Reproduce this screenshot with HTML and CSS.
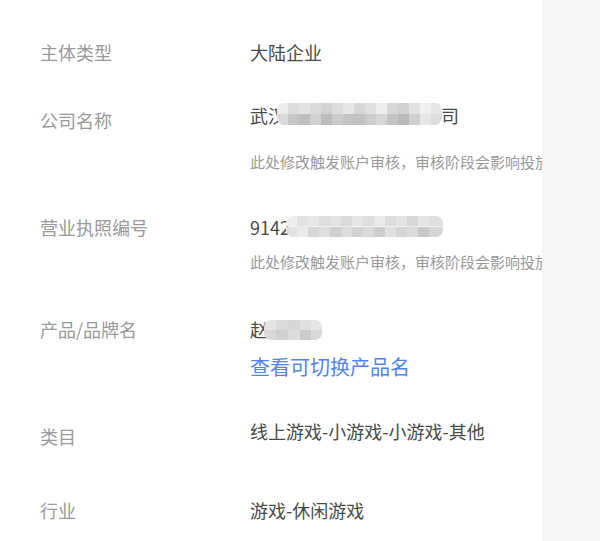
FILE: index.html
```html
<!DOCTYPE html>
<html lang="zh-CN">
<head>
    <meta charset="UTF-8">
    <meta name="viewport" content="width=device-width, initial-scale=1.0">
    <title>账户资质信息</title>
    <link rel="stylesheet" href="styles.css">
</head>
<body>
    <div class="panel">
        <div class="row row-type">
            <div class="label">主体类型</div>
            <div class="value">
                <div class="text">大陆企业</div>
            </div>
        </div>

        <div class="row row-company">
            <div class="label label-low">公司名称</div>
            <div class="value">
                <div class="text">武汉<span class="mosaic mosaic-company"></span>司</div>
                <div class="hint">此处修改触发账户审核，审核阶段会影响投放</div>
            </div>
        </div>

        <div class="row row-license">
            <div class="label">营业执照编号</div>
            <div class="value">
                <div class="text">9142<span class="mosaic mosaic-license"></span></div>
                <div class="hint">此处修改触发账户审核，审核阶段会影响投放</div>
            </div>
        </div>

        <div class="row row-product">
            <div class="label">产品/品牌名</div>
            <div class="value">
                <div class="text">赵<span class="mosaic mosaic-product"></span></div>
                <a class="link" href="#">查看可切换产品名</a>
            </div>
        </div>

        <div class="row row-category">
            <div class="label label-low">类目</div>
            <div class="value">
                <div class="text">线上游戏-小游戏-小游戏-其他</div>
            </div>
        </div>

        <div class="row">
            <div class="label">行业</div>
            <div class="value">
                <div class="text">游戏-休闲游戏</div>
            </div>
        </div>
    </div>
</body>
</html>
```

FILE: styles.css
```css
* {
    margin: 0;
    padding: 0;
    box-sizing: border-box;
    font-family: 'Noto Sans CJK SC', 'Noto Sans', sans-serif;
}

body {
    background: #f5f5f5;
    min-height: 100vh;
}

.panel {
    width: 542px;
    min-height: 100vh;
    background: #fff;
    padding: 40px 0 0 40px;
    overflow: hidden;
}

.row {
    display: flex;
}

.row-type {
    margin-bottom: 39px;
}

.row-company {
    margin-bottom: 43px;
}

.row-license {
    margin-bottom: 45px;
}

.row-product {
    margin-bottom: 38px;
}

.row-category {
    margin-bottom: 50px;
}

.label {
    width: 210px;
    flex-shrink: 0;
    color: #999;
    font-size: 18px;
    line-height: 24px;
}

.label-low {
    padding-top: 5px;
}

.value {
    flex: 1;
    min-width: 0;
    white-space: nowrap;
}

.text {
    color: #4a4a4a;
    font-size: 18px;
    line-height: 24px;
}

.hint {
    color: #999;
    font-size: 15px;
    line-height: 20px;
}

.row-company .hint {
    margin-top: 25px;
}

.row-license .hint {
    margin-top: 13px;
}

.link {
    display: block;
    margin-top: 12px;
    color: #5283f3;
    font-size: 20px;
    line-height: 28px;
    text-decoration: none;
}

/* blurred-out private text */
.mosaic {
    display: inline-block;
    border-radius: 7px;
    filter: blur(0.7px);
    background-repeat: no-repeat;
    background-size: 100% 50%;
    background-position: top, bottom;
}

.mosaic-company {
    width: 165px;
    height: 22px;
    margin-left: -9px;
    margin-right: -1px;
    vertical-align: -2px;
    background-image:
        linear-gradient(90deg, #ebebeb 0 11px, #dcdcdc 11px 22px, #e3e3e3 22px 33px, #d9d9d9 33px 44px, #d3d3d3 44px 55px, #dddddd 55px 66px, #e6e6e6 66px 77px, #d6d6d6 77px 88px, #e0e0e0 88px 99px, #eeeeee 99px 110px, #d8d8d8 110px 121px, #d1d1d1 121px 132px, #e2e2e2 132px 143px, #f0f0f0 143px 154px, #e6e6e6 154px),
        linear-gradient(90deg, #dadada 0 11px, #c6c6c6 11px 22px, #bfbfbf 22px 33px, #d2d2d2 33px 44px, #bcbcbc 44px 55px, #cbcbcb 55px 66px, #c3c3c3 66px 77px, #c1c1c1 77px 88px, #cccccc 88px 99px, #d6d6d6 99px 110px, #c4c4c4 110px 121px, #b9b9b9 121px 132px, #cfcfcf 132px 143px, #e6e6e6 143px 154px, #dddddd 154px);
}

.mosaic-license {
    width: 157px;
    height: 21px;
    margin-left: -4px;
    vertical-align: -2px;
    background-image:
        linear-gradient(90deg, #eeeeee 0 11px, #e2e2e2 11px 22px, #e8e8e8 22px 33px, #dddddd 33px 44px, #e4e4e4 44px 55px, #d9d9d9 55px 66px, #e6e6e6 66px 77px, #dedede 77px 88px, #e9e9e9 88px 99px, #dcdcdc 99px 110px, #e3e3e3 110px 121px, #d7d7d7 121px 132px, #e5e5e5 132px 143px, #dfdfdf 143px),
        linear-gradient(90deg, #e2e2e2 0 11px, #eaeaea 11px 22px, #d6d6d6 22px 33px, #dfdfdf 33px 44px, #cfcfcf 44px 55px, #dcdcdc 55px 66px, #d2d2d2 66px 77px, #d9d9d9 77px 88px, #cdcdcd 88px 99px, #e0e0e0 99px 110px, #d4d4d4 110px 121px, #dbdbdb 121px 132px, #c8c8c8 132px 143px, #d6d6d6 143px);
}

.mosaic-product {
    width: 58px;
    height: 20px;
    margin-left: -4px;
    vertical-align: -3px;
    background-image:
        linear-gradient(90deg, #e4e4e4 0 12px, #dadada 12px 24px, #d6d6d6 24px 36px, #e0e0e0 36px 47px, #e6e6e6 47px),
        linear-gradient(90deg, #d8d8d8 0 12px, #cfcfcf 12px 24px, #dcdcdc 24px 36px, #cacaca 36px 47px, #d9d9d9 47px);
}
```
